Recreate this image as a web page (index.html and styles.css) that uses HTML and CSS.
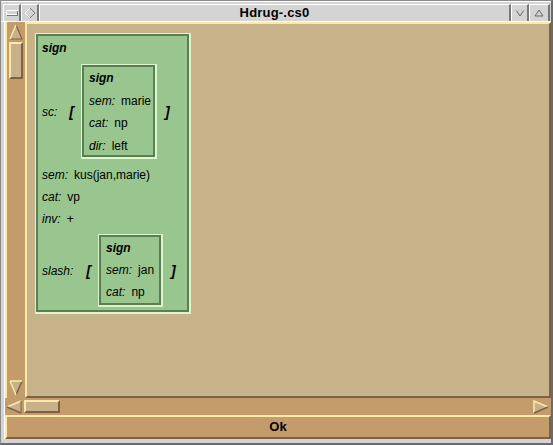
FILE: index.html
```html
<!DOCTYPE html>
<html>
<head>
<meta charset="utf-8">
<link rel="stylesheet" href="styles.css">
</head>
<body>
<div class="window">
  <div class="titlebar">
    <div class="tbtn"><svg width="12" height="6" viewBox="0 0 12 6"><rect x="0.5" y="0.5" width="11" height="4" fill="none" stroke="#fff"/><path d="M1 5.5H12M11.5 1V5" stroke="#777"/></svg></div>
    <div class="tbtn"><svg width="12" height="12" viewBox="0 0 12 12"><path d="M6 1L11 6" stroke="#777"/><path d="M11 6L6 11" stroke="#777"/><path d="M6 11L1 6L6 1" fill="none" stroke="#fff"/></svg></div>
    <div class="title">Hdrug-.cs0</div>
    <div class="tbtn"><svg width="10" height="8" viewBox="0 0 10 8"><path d="M1 1H9L5 7Z" fill="none" stroke="#666"/><path d="M1 1H9" stroke="#fff"/></svg></div>
    <div class="tbtn last"><svg width="10" height="8" viewBox="0 0 10 8"><path d="M5 1L9 7H1Z" fill="none" stroke="#666"/></svg></div>
  </div>
  <div class="client">
    <div class="main">
      <div class="vscroll">
        <svg class="arrow" width="14" height="16" viewBox="0 0 14 16"><path d="M7 1L13 15H1Z" fill="#c8b08a"/><path d="M7 1L13 15H1" fill="none" stroke="#7a6244" stroke-width="1.2"/><path d="M1 15L7 1" stroke="#fbe9a8" stroke-width="1.5"/></svg>
        <div class="vthumb"></div>
        <div class="vspace"></div>
        <svg class="arrow" width="14" height="16" viewBox="0 0 14 16"><path d="M1 1H13L7 15Z" fill="#c8b08a"/><path d="M13 1L7 15" stroke="#7a6244" stroke-width="1.5"/><path d="M1 1H13M1 1L7 15" fill="none" stroke="#fbe9a8" stroke-width="1.5"/></svg>
      </div>
      <div class="canvas">
        <div class="fs outer">
          <div class="row"><span class="type">sign</span></div>
          <div class="row boxrow">
            <span class="lab">sc:</span>
            <span class="br open">[</span>
            <div class="fs inner1">
              <div class="row"><span class="type">sign</span></div>
              <div class="row"><span class="lab">sem:</span><span class="val">marie</span></div>
              <div class="row"><span class="lab">cat:</span><span class="val">np</span></div>
              <div class="row"><span class="lab">dir:</span><span class="val">left</span></div>
            </div>
            <span class="br close">]</span>
          </div>
          <div class="row"><span class="lab">sem:</span><span class="val">kus(jan,marie)</span></div>
          <div class="row"><span class="lab">cat:</span><span class="val">vp</span></div>
          <div class="row"><span class="lab">inv:</span><span class="val">+</span></div>
          <div class="row boxrow slashrow">
            <span class="lab">slash:</span>
            <span class="br open">[</span>
            <div class="fs inner2">
              <div class="row"><span class="type">sign</span></div>
              <div class="row"><span class="lab">sem:</span><span class="val">jan</span></div>
              <div class="row"><span class="lab">cat:</span><span class="val">np</span></div>
            </div>
            <span class="br close">]</span>
          </div>
        </div>
      </div>
    </div>
    <div class="hscroll">
      <svg class="harrow" width="16" height="14" viewBox="0 0 16 14"><path d="M1 7L15 1V13Z" fill="#c8b08a"/><path d="M15 1L1 7" stroke="#fbe9a8" stroke-width="1.5"/><path d="M1 7L15 13" stroke="#7a6244" stroke-width="1.5"/><path d="M15 1V13" stroke="#7a6244" stroke-width="1"/></svg>
      <div class="hthumb"></div>
      <div class="hspace"></div>
      <svg class="harrow" width="16" height="14" viewBox="0 0 16 14"><path d="M15 7L1 1V13Z" fill="#c8b08a"/><path d="M1 13V1L15 7" fill="none" stroke="#fbe9a8" stroke-width="1.5"/><path d="M15 7L1 13" stroke="#7a6244" stroke-width="1.5"/></svg>
    </div>
    <div class="ok">Ok</div>
  </div>
</div>
</body>
</html>
```
FILE: styles.css
```css
* { box-sizing: border-box; }
html, body { margin: 0; padding: 0; }
body {
  width: 553px;
  height: 445px;
  overflow: hidden;
  background: #d4d4d4;
  font-family: "Liberation Sans", Arial, sans-serif;
}
.window {
  width: 553px;
  height: 445px;
  border-top: 1px solid #8a8a8a;
  border-left: 1px solid #8a8a8a;
  border-right: 2px solid #6a6a6a;
  border-bottom: 2px solid #6a6a6a;
  background: #d4d4d4;
  display: flex;
  flex-direction: column;
}
.titlebar {
  height: 21px;
  display: flex;
  border-top: 1px solid #fff;
  padding: 2px 1px 0 2px;
  border-bottom: 1px solid #fff;
}
.tbtn {
  width: 18px;
  height: 17px;
  display: flex;
  align-items: center;
  justify-content: center;
  border-top: 1px solid #fff;
  border-left: 1px solid #fff;
  border-right: 2px solid #777;
  background: #d4d4d4;
}
.tbtn.last { width: 21px; }
.title {
  flex: 1;
  height: 17px;
  border-top: 1px solid #fff;
  border-left: 1px solid #fff;
  border-right: 2px solid #777;
  text-align: center;
  font-weight: bold;
  font-size: 13px;
  line-height: 16px;
  letter-spacing: 0.2px;
  color: #000;
}
.client {
  flex: 1;
  display: flex;
  flex-direction: column;
  margin: 0 0 4px 3px;
  border-left: 1px solid #fff;
}
.main {
  flex: 1;
  display: flex;
  min-height: 0;
}
.vscroll {
  width: 20px;
  background: #c49c6c;
  border-left: 2px solid #fbe9a8;
  display: flex;
  flex-direction: column;
  align-items: center;
  padding: 2px 0 2px 0;
}
.arrow { display: block; flex: none; }
.vthumb {
  width: 14px;
  height: 37px;
  margin-top: 2px;
  background: #c8b08a;
  border-top: 2px solid #fbe9a8;
  border-left: 2px solid #fbe9a8;
  border-right: 2px solid #7a6244;
  border-bottom: 2px solid #7a6244;
  flex: none;
}
.vspace { flex: 1; }
.canvas {
  flex: 1;
  background: #c8b28a;
  border-top: 2px solid #fbe9a8;
  border-left: 2px solid #fbe9a8;
  border-right: 2px solid #7a6244;
  border-bottom: 2px solid #7a6244;
  padding: 9px 0 0 8px;
  overflow: hidden;
}
.hscroll {
  height: 17px;
  background: #c49c6c;
  display: flex;
  align-items: center;
  padding: 0 2px 0 1px;
}
.harrow { display: block; flex: none; }
.hthumb {
  width: 36px;
  height: 13px;
  margin-left: 2px;
  background: #c8b08a;
  border-top: 2px solid #fbe9a8;
  border-left: 2px solid #fbe9a8;
  border-right: 2px solid #7a6244;
  border-bottom: 2px solid #7a6244;
}
.hspace { flex: 1; }
.ok {
  height: 24px;
  background: #c49c6c;
  border-top: 2px solid #fbe9a8;
  border-left: 2px solid #fbe9a8;
  border-right: 2px solid #7a6244;
  border-bottom: 2px solid #7a6244;
  text-align: center;
  font-weight: bold;
  font-size: 13px;
  line-height: 20px;
  color: #000;
}
/* feature structures */
.fs {
  background: #99c68f;
  border-style: solid;
  border-color: #d8f8c8;
  border-width: 1px 2px 2px 1px;
  box-shadow: inset 0 0 0 2px #5d7c57;
  font-size: 12px;
  color: #000;
}
.outer {
  width: 156px;
  padding: 3px 6px 5px 6px;
}
.inner1 {
  width: 76px;
  height: 95px;
  padding: 2px 4px 0 7px;
}
.inner2 {
  width: 65px;
  height: 73px;
  padding: 2px 4px 0 7px;
}
.row {
  display: flex;
  align-items: center;
  height: 22px;
  white-space: nowrap;
}
.inner1 .row { height: 22.5px; }
.boxrow { height: auto; margin: 5px 0 5px; }
.slashrow { margin: 4px 0 0; }
.type { font-weight: bold; font-style: italic; }
.lab { font-style: italic; margin-right: 6px; }
.br { font-weight: bold; font-style: italic; font-size: 14px; }
.boxrow > .lab { margin-right: 12px; }
.slashrow > .lab { margin-right: 13px; }
.br.open { margin-right: 7px; }
.br.close { margin-left: 8px; }
```
